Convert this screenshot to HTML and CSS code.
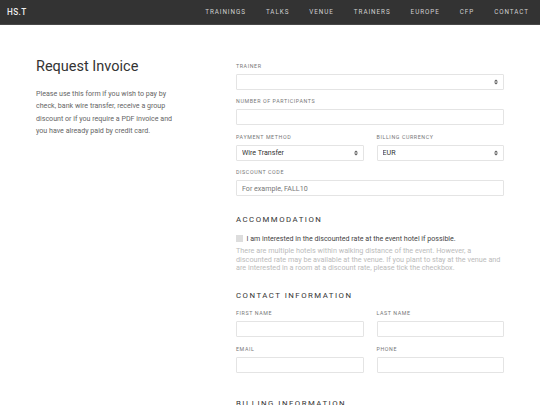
FILE: index.html
```html
<!DOCTYPE html>
<html lang="en">

<head>
    <meta charset="UTF-8">
    <meta name="viewport" content="width=device-width, initial-scale=1.0">
    <title>Request Invoice</title>
    <link rel="stylesheet" href="styles.css">
</head>

<body>
    <div class="topbar">
        <div class="brand">HS.T</div>
        <ul class="nav">
            <li>TRAININGS</li>
            <li>TALKS</li>
            <li>VENUE</li>
            <li>TRAINERS</li>
            <li>EUROPE</li>
            <li>CFP</li>
            <li>CONTACT</li>
        </ul>
    </div>

    <div class="page">
        <div class="intro">
            <h1>Request Invoice</h1>
            <p>Please use this form if you wish to pay by check, bank wire transfer, receive a group discount or if you require a PDF invoice and you have already paid by credit card.</p>
        </div>

        <form class="form">
            <div class="section">
                <div class="field">
                    <label>TRAINER</label>
                    <div class="select">
                        <select></select>
                        <span class="arrows"><svg width="4" height="6" viewBox="0 0 4 6"><path d="M0 2.4L2 0.4L4 2.4Z M0 3.6L2 5.6L4 3.6Z" fill="#555"/></svg></span>
                    </div>
                </div>
                <div class="field">
                    <label>NUMBER OF PARTICIPANTS</label>
                    <input type="text">
                </div>
                <div class="row">
                    <div class="field">
                        <label>PAYMENT METHOD</label>
                        <div class="select">
                            <select><option>Wire Transfer</option></select>
                            <span class="arrows"><svg width="4" height="6" viewBox="0 0 4 6"><path d="M0 2.4L2 0.4L4 2.4Z M0 3.6L2 5.6L4 3.6Z" fill="#555"/></svg></span>
                        </div>
                    </div>
                    <div class="field">
                        <label>BILLING CURRENCY</label>
                        <div class="select">
                            <select><option>EUR</option></select>
                            <span class="arrows"><svg width="4" height="6" viewBox="0 0 4 6"><path d="M0 2.4L2 0.4L4 2.4Z M0 3.6L2 5.6L4 3.6Z" fill="#555"/></svg></span>
                        </div>
                    </div>
                </div>
                <div class="field">
                    <label>DISCOUNT CODE</label>
                    <input type="text" placeholder="For example, FALL10">
                </div>
            </div>

            <div class="section">
                <h2>ACCOMMODATION</h2>
                <div class="check">
                    <span class="box"></span>
                    I am interested in the discounted rate at the event hotel if possible.
                </div>
                <p class="help">There are multiple hotels within walking distance of the event. However, a discounted rate may be available at the venue. If you plant to stay at the venue and are interested in a room at a discount rate, please tick the checkbox.</p>
            </div>

            <div class="section section-contact">
                <h2>CONTACT INFORMATION</h2>
                <div class="row">
                    <div class="field">
                        <label>FIRST NAME</label>
                        <input type="text">
                    </div>
                    <div class="field">
                        <label>LAST NAME</label>
                        <input type="text">
                    </div>
                </div>
                <div class="row">
                    <div class="field">
                        <label>EMAIL</label>
                        <input type="text">
                    </div>
                    <div class="field">
                        <label>PHONE</label>
                        <input type="text">
                    </div>
                </div>
            </div>

            <div class="section">
                <h2>BILLING INFORMATION</h2>
            </div>
        </form>
    </div>
</body>

</html>
```

FILE: styles.css
```css
* {
    padding: 0;
    margin: 0;
    box-sizing: border-box;
}

body {
    font-family: Roboto, "Liberation Sans", sans-serif;
    background: #fff;
    color: #333;
}

.topbar {
    height: 25px;
    background: #333;
    border-bottom: 1px solid #484848;
    display: flex;
    align-items: center;
    justify-content: space-between;
    padding: 0 11px 0 7px;
}

.brand {
    color: #eee;
    font-size: 8.2px;
    font-weight: 500;
    letter-spacing: 0.4px;
}

.nav {
    list-style: none;
    display: flex;
    gap: 20px;
}

.nav li {
    color: #d0d0d0;
    font-size: 6.3px;
    letter-spacing: 0.95px;
}

.page {
    display: flex;
    padding: 33px 0 0 36px;
}

.intro {
    width: 200px;
}

.intro h1 {
    font-size: 14.5px;
    font-weight: 400;
    line-height: 18px;
    color: #333;
}

.intro p {
    margin-top: 12px;
    width: 142px;
    font-size: 7.1px;
    line-height: 12.4px;
    color: #666;
}

.form {
    width: 268px;
    padding-top: 3.5px;
}

.section-contact {
    margin-bottom: 6px;
}

.row {
    display: grid;
    grid-template-columns: 1fr 1fr;
    gap: 13px;
}

.field {
    margin-bottom: 7.5px;
}

.field label {
    display: block;
    font-size: 5.3px;
    letter-spacing: 0.6px;
    line-height: 8px;
    margin-bottom: 4px;
    color: #777;
}

.field input,
.field select {
    display: block;
    width: 100%;
    height: 16px;
    border: 1px solid #e4e4e4;
    border-radius: 1px;
    background: #fff;
    padding: 0 5px;
    font-family: Roboto, "Liberation Sans", sans-serif;
    font-size: 7.1px;
    color: #333;
    outline: none;
    appearance: none;
    -webkit-appearance: none;
}

.field input::placeholder {
    color: #777;
}

.select {
    position: relative;
}

.arrows {
    position: absolute;
    right: 6px;
    top: 5px;
    line-height: 0;
}

h2 {
    margin-top: 17.5px;
    font-size: 7.8px;
    font-weight: 400;
    line-height: 12px;
    letter-spacing: 1.5px;
    color: #333;
}

.check {
    display: flex;
    align-items: center;
    margin-top: 8px;
    font-size: 7.1px;
    line-height: 10px;
    color: #444;
}

.check .box {
    width: 6.5px;
    height: 6.5px;
    background: #ddd;
    margin-right: 4px;
}

.help {
    margin-top: 3.5px;
    margin-bottom: 7px;
    font-size: 7.25px;
    line-height: 8.6px;
    color: #bbb;
}

.section-contact h2 {
    margin-bottom: 7px;
}
```
